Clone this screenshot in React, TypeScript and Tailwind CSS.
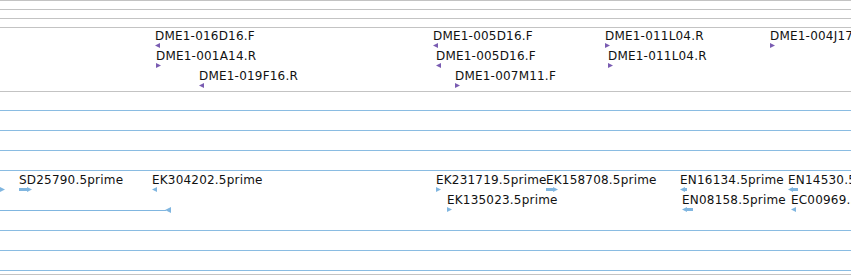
import React from "react";

type Dir = "left" | "right";

type Feat = {
  name: string;
  x: number;
  row: number;
  dir: Dir;
  body?: number;
};

const bacEnds: Feat[] = [
  { name: "DME1-016D16.F", x: 155, row: 0, dir: "left" },
  { name: "DME1-005D16.F", x: 433, row: 0, dir: "left" },
  { name: "DME1-011L04.R", x: 605, row: 0, dir: "right" },
  { name: "DME1-004J17.R", x: 770, row: 0, dir: "right" },
  { name: "DME1-001A14.R", x: 156, row: 1, dir: "right" },
  { name: "DME1-005D16.F", x: 436, row: 1, dir: "left" },
  { name: "DME1-011L04.R", x: 608, row: 1, dir: "right" },
  { name: "DME1-019F16.R", x: 199, row: 2, dir: "left" },
  { name: "DME1-007M11.F", x: 455, row: 2, dir: "right" },
];

const ests: Feat[] = [
  { name: "SD25790.5prime", x: 19, row: 0, dir: "right", body: 8 },
  { name: "EK304202.5prime", x: 152, row: 0, dir: "left" },
  { name: "EK231719.5prime", x: 436, row: 0, dir: "right" },
  { name: "EK158708.5prime", x: 546, row: 0, dir: "right", body: 7 },
  { name: "EN16134.5prime", x: 680, row: 0, dir: "left", body: 2 },
  { name: "EN14530.5prime", x: 788, row: 0, dir: "left", body: 5 },
  { name: "EK135023.5prime", x: 447, row: 1, dir: "right" },
  { name: "EN08158.5prime", x: 682, row: 1, dir: "left", body: 6 },
  { name: "EC00969.5prime", x: 791, row: 1, dir: "left" },
];

const Arrow = ({ dir, color, body = 0 }: { dir: Dir; color: string; body?: number }) => {
  const w = body + 5;
  return (
    <svg width={w} height={5} className="block">
      {dir === "right" ? (
        <>
          {body > 0 && <rect x={0} y={1} width={body} height={3} fill={color} />}
          <polygon points={`${body},0 ${body},5 ${w},2.5`} fill={color} />
        </>
      ) : (
        <>
          <polygon points={`5,0 5,5 0,2.5`} fill={color} />
          {body > 0 && <rect x={5} y={1} width={body} height={3} fill={color} />}
        </>
      )}
    </svg>
  );
};

const Feature = ({ f, color, top }: { f: Feat; color: string; top: number }) => (
  <div
    className="absolute flex flex-col items-start"
    style={{ left: f.x, top: top + f.row * 20 }}
  >
    <span className="whitespace-nowrap text-[12px] leading-[14px] tracking-[0.2px] text-[#111]">
      {f.name}
    </span>
    <Arrow dir={f.dir} color={color} body={f.body} />
  </div>
);

const grayLine = "border-t border-[#c3c3c3]";
const blueLine = "border-t border-[#8abce2]";

export default function App() {
  return (
    <div className="relative h-[275px] w-[851px] overflow-hidden bg-white font-['DejaVu_Sans',sans-serif]">
      <div className={`h-[9px] ${grayLine}`} />
      <div className={`h-[9px] ${grayLine}`} />
      <div className={`h-[9px] ${grayLine}`} />

      {/* BAC ends track */}
      <div className={`relative h-[64px] ${grayLine}`}>
        {bacEnds.map((f, i) => (
          <Feature key={i} f={f} color="#7a5cb2" top={1} />
        ))}
      </div>

      <div className={`h-[19px] ${grayLine}`} />
      <div className={`h-[20px] ${blueLine}`} />
      <div className={`h-[20px] ${blueLine}`} />
      <div className={`h-[20px] ${blueLine}`} />

      {/* EST track */}
      <div className={`relative h-[60px] ${blueLine}`}>
        <div className="absolute left-[-3px] top-[16px]">
          <Arrow dir="right" color="#80b6e0" body={3} />
        </div>
        {ests.map((f, i) => (
          <Feature key={i} f={f} color="#80b6e0" top={2} />
        ))}
        <div className="absolute left-0 top-[36px] flex items-center">
          <div className="h-px w-[166px] bg-[#80b6e0]" />
          <svg width={6} height={6} className="-ml-px block">
            <polygon points="0,3 6,0 6,6" fill="#80b6e0" />
          </svg>
        </div>
      </div>

      <div className={`h-[20px] ${blueLine}`} />
      <div className={`h-[20px] ${blueLine}`} />
      <div className={`h-[4px] ${blueLine}`} />
      <div className={`h-px ${grayLine}`} />
    </div>
  );
}
